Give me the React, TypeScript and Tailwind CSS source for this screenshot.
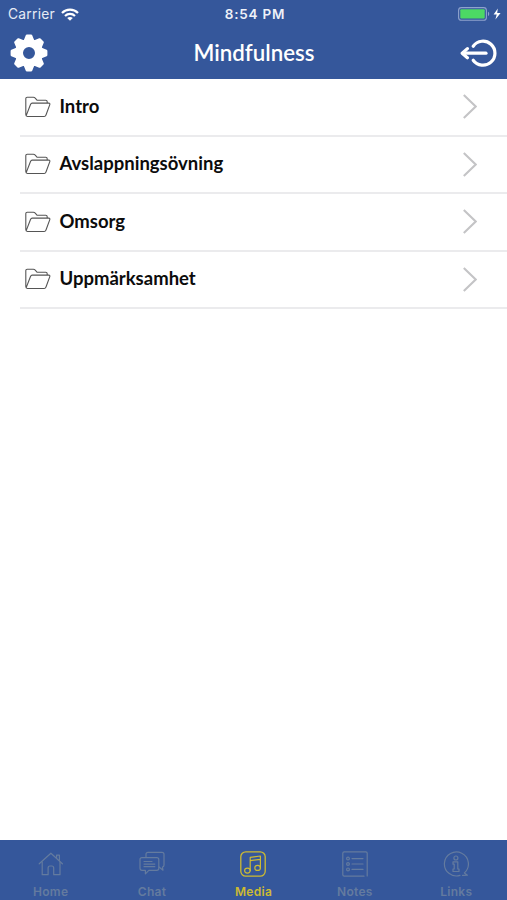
import type { ReactNode } from "react"

const folders = ["Intro", "Avslappningsövning", "Omsorg", "Uppmärksamhet"]

function WifiIcon() {
  return (
    <svg width="18" height="13" viewBox="0 0 18 13" fill="none" stroke="#fff" strokeWidth="2.2">
      <path d="M1 4.9C5.4 .4 12.6 .4 17 4.9" />
      <path d="M4 8C6.9 5.1 11.1 5.1 14 8" />
      <path d="M6.2 10.1C7.8 8.6 10.2 8.6 11.8 10.1L9 12.8Z" fill="#fff" stroke="none" />
    </svg>
  )
}

function BatteryIcon() {
  return (
    <svg width="44" height="14" viewBox="0 0 44 14" fill="none">
      <rect x="0.6" y="0.6" width="27.8" height="12.6" rx="2.8" stroke="#8fa3cd" strokeWidth="1.1" />
      <rect x="2.3" y="2.3" width="24.4" height="9.2" rx="1" fill="#4cd964" />
      <path d="M30 4.8C31.6 5.2 31.6 8.6 30 9Z" fill="#8fa3cd" />
      <path d="M39.8 1.6L35.6 7.6H38.7L37.4 12.4L42.6 5.9H39.2Z" fill="#fff" />
    </svg>
  )
}

function GearIcon() {
  return (
    <svg width="38" height="38" viewBox="-19 -19 38 38">
      <g fill="#fff" stroke="#fff" strokeWidth="2.4" strokeLinejoin="round">
        {[0, 45, 90, 135, 180, 225, 270, 315].map((angle) => (
          <path key={angle} d="M-4.6 -11L-2.1 -17.2H2.1L4.6 -11Z" transform={`rotate(${angle})`} />
        ))}
      </g>
      <circle r="10" fill="none" stroke="#fff" strokeWidth="8" />
    </svg>
  )
}

function LogoutIcon() {
  return (
    <svg width="38" height="30" viewBox="0 0 38 30" fill="none" stroke="#fff" strokeWidth="3.2" strokeLinecap="round" strokeLinejoin="round">
      <path d="M13.2 8.2A12 12 0 1 1 13.2 22.2" />
      <path d="M26 15.2H3" />
      <path d="M7.4 10.6L2.2 15.2L7.4 19.8" />
    </svg>
  )
}

function FolderIcon() {
  return (
    <svg width="26" height="22" viewBox="0 0 26 22" fill="none" stroke="#555" strokeWidth="1.1" strokeLinejoin="round">
      <path d="M22.2 7V5.8Q22.2 4.3 20.7 4.3H12.2L10 1.9Q9.4 1.2 8.4 1.2H2.2Q.8 1.2 .8 2.6V18.6Q.8 20.5 2.4 20.5H19.2Q20.5 20.5 20.9 19.2L24.8 8.6Q25.2 7.1 23.8 7.1H7.2Q6 7.1 5.6 8.3L1.2 19.6" />
    </svg>
  )
}

function Chevron() {
  return (
    <svg width="14" height="25" viewBox="0 0 14 25" fill="none" stroke="#c4c4c6" strokeWidth="2.1">
      <path d="M.8 1L12.7 12.5L.8 24" />
    </svg>
  )
}

function TabIcon({ children }: { children: ReactNode }) {
  return (
    <svg width="26" height="26" viewBox="0 0 26 26" fill="none" stroke="currentColor" strokeWidth="1.2" strokeLinejoin="round" strokeLinecap="round">
      {children}
    </svg>
  )
}

const tabs = [
  {
    label: "Home",
    icon: (
      <TabIcon>
        <path d="M1.2 12.8L12.9 2.2L24.4 12.8" />
        <path d="M4.2 11V23.7H10.1V17Q10.1 15 12 15H13.8Q15.7 15 15.7 17V23.7H22V11" />
        <path d="M18.6 6.6V4.2H21.4V9.3" />
      </TabIcon>
    ),
  },
  {
    label: "Chat",
    icon: (
      <TabIcon>
        <path d="M7 6.1V3.3Q7 1.3 9 1.3H23Q25 1.3 25 3.3V14Q25 16 23.4 16L24 19.2L20 16" />
        <path d="M3 6.6H17.8Q19.8 6.6 19.8 8.6V17.3Q19.8 19.3 17.8 19.3H9.8L6.4 22.9V19.3H3Q1 19.3 1 17.3V8.6Q1 6.6 3 6.6Z" />
        <path d="M5 10.5H13M5 13.1H15.8M5 15.7H15.8" />
      </TabIcon>
    ),
  },
  {
    label: "Media",
    active: true,
    icon: (
      <TabIcon>
        <rect x="0.8" y="0.8" width="24.4" height="24.4" rx="5" strokeWidth="1.3" />
        <ellipse cx="7.4" cy="19.6" rx="2.8" ry="2.5" />
        <ellipse cx="17.6" cy="16.9" rx="2.8" ry="2.5" />
        <path d="M10.2 19.4V6.4L20.4 5V16.7M10.2 9.7L20.4 8.3" />
      </TabIcon>
    ),
  },
  {
    label: "Notes",
    icon: (
      <TabIcon>
        <path d="M22 25.2H2.2Q.8 25.2 .8 23.8V2.2Q.8 .8 2.2 .8H23.8Q25.2 .8 25.2 2.2V25" />
        <path d="M10 7.6H21M10 13H21M10 18.4H21" />
        <circle cx="6" cy="7.6" r="1.4" />
        <circle cx="6" cy="13" r="1.4" />
        <circle cx="6" cy="18.4" r="1.4" />
      </TabIcon>
    ),
  },
  {
    label: "Links",
    icon: (
      <TabIcon>
        <path d="M21.4 21.9A12 12 0 1 0 17 24.4M21.4 21.9L24.4 24.2L19.6 24.4" />
        <circle cx="12.9" cy="7" r="2" />
        <path d="M10 10.8H14.8V18H16V20.5H10V18H11.2V13.2H10Z" />
      </TabIcon>
    ),
  },
]

export default function App() {
  return (
    <div className="flex h-[900px] w-[507px] flex-col overflow-hidden bg-white">
      <header className="h-[79px] bg-[#35579b] text-white">
        <div className="grid h-[27px] grid-cols-3 items-center pr-[5px] pl-2 font-[Inter,sans-serif]">
          <div className="flex items-center gap-1.5 pt-px">
            <span className="text-[13.8px] tracking-[0.25px] text-[#e6ebf5]">Carrier</span>
            <WifiIcon />
          </div>
          <span className="pt-px text-center text-[13.5px] font-semibold tracking-[0.75px] text-[#eef1f8]">8:54 PM</span>
          <div className="flex justify-end">
            <BatteryIcon />
          </div>
        </div>
        <div className="flex h-[52px] items-center justify-between pr-[9px] pl-[10px]">
          <GearIcon />
          <h1 className="font-[Lato,sans-serif] text-[22.3px] font-semibold">Mindfulness</h1>
          <LogoutIcon />
        </div>
      </header>

      <main className="flex-1 pl-5">
        {folders.map((name) => (
          <div key={name} className="flex h-[57.5px] items-center border-b-2 border-[#ebebed] pr-[30px] pl-[4.5px]">
            <FolderIcon />
            <span className="ml-[9px] flex-1 font-[Lato,sans-serif] text-[18.5px] font-bold text-[#0c0c0c]">{name}</span>
            <Chevron />
          </div>
        ))}
      </main>

      <nav className="grid h-[60px] grid-cols-5 bg-[#35579b] font-[Inter,sans-serif]">
        {tabs.map((tab) => (
          <div
            key={tab.label}
            className={`flex flex-col items-center pt-[11px] ${tab.active ? "text-[#cdbb32]" : "text-[#647b9f]"}`}
          >
            {tab.icon}
            <span className="mt-[7px] text-[12px] leading-4 font-semibold tracking-[0.3px]">{tab.label}</span>
          </div>
        ))}
      </nav>
    </div>
  )
}
